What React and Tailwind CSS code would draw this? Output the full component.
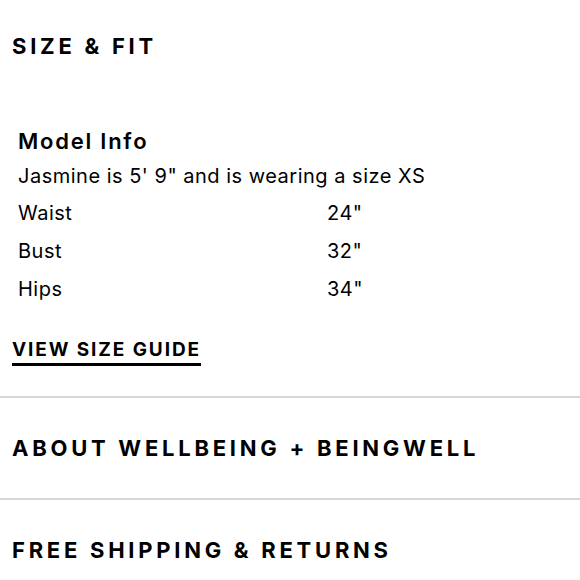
import React from 'react';

const rows = [
  { label: 'Waist', value: '24"' },
  { label: 'Bust', value: '32"' },
  { label: 'Hips', value: '34"' },
];

const headingCls = "text-[22px] leading-[32px] font-bold tracking-[0.17em] text-black";

const App = () => {
  return (
    <div className="w-[580px] h-[580px] overflow-hidden bg-white text-black" style={{ fontFamily: 'Inter, "Noto Sans", sans-serif' }}>
      {/* Size & fit */}
      <div className="pl-3 pt-[30px]">
        <h2 className={headingCls}>SIZE &amp; FIT</h2>

        <div className="pl-[6px] mt-[64px]">
          <h3 className="text-[22px] leading-[30px] font-semibold tracking-[0.08em]">Model Info</h3>
          <p className="text-[20px] leading-[30px] mt-[5px] tracking-[0.025em]">Jasmine is 5' 9" and is wearing a size XS</p>
          <div className="mt-[3px]">
            {rows.map(r => (
              <div key={r.label} className="flex text-[20px] leading-[38px] tracking-[0.025em]">
                <span className="w-[309px]">{r.label}</span>
                <span>{r.value}</span>
              </div>
            ))}
          </div>
        </div>

        <a href="#" className="inline-block mt-[30px] text-[19px] leading-[24px] font-bold tracking-[0.1em] border-b-[3px] border-black pb-[1px]">
          VIEW SIZE GUIDE
        </a>
      </div>

      <div className="mt-[30px] border-t-2 border-[#d6d6d6]" />

      <div className="pl-3 h-[100px] flex items-center">
        <h2 className={headingCls}>ABOUT WELLBEING + BEINGWELL</h2>
      </div>

      <div className="border-t-2 border-[#d6d6d6]" />

      <div className="pl-3 h-[100px] flex items-center">
        <h2 className={headingCls}>FREE SHIPPING &amp; RETURNS</h2>
      </div>
    </div>
  );
};

export default App;
